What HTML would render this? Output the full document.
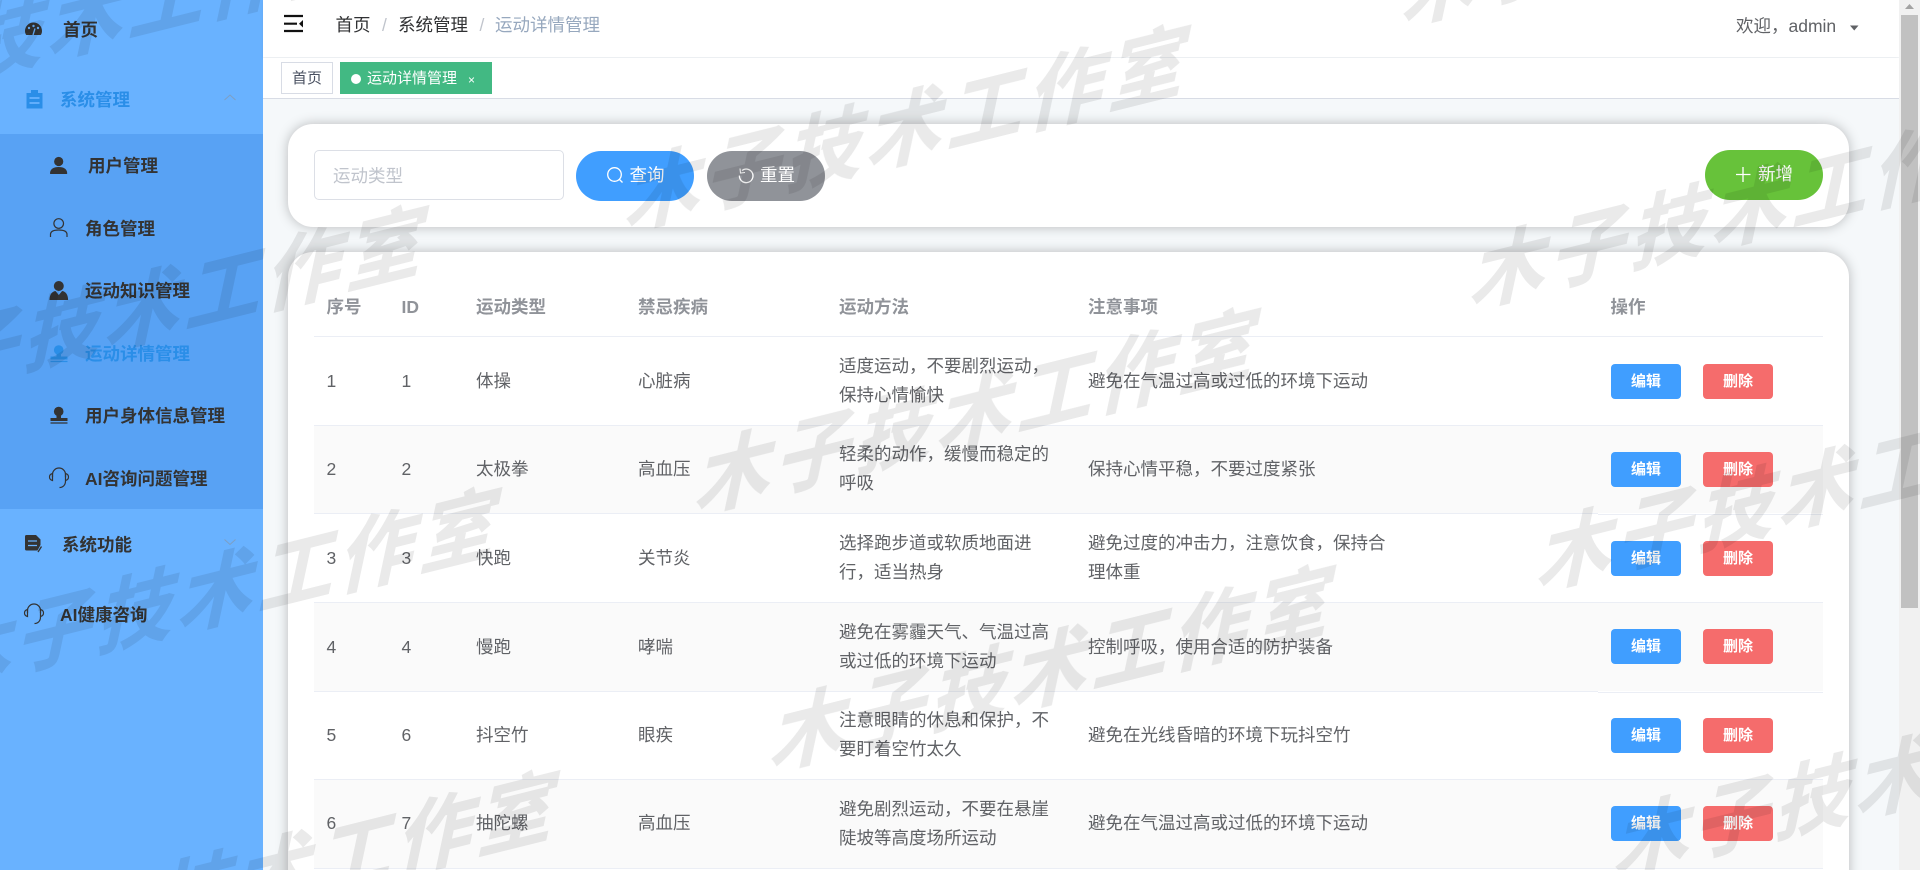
<!DOCTYPE html>
<html lang="zh-CN">
<head>
<meta charset="utf-8">
<title>运动详情管理</title>
<style>
html,body{margin:0;padding:0;width:1920px;height:870px;overflow:hidden;background:#f5f8fa}
body{position:relative;font-family:"Liberation Sans","Noto Sans CJK SC",sans-serif;font-size:17.5px;color:#606266}
.a{position:absolute;white-space:nowrap;line-height:30px;height:30px}
.box{position:absolute}
.side{left:0;top:0;width:263px;height:870px;background:#69b2ff}
.sub{left:0;top:134px;width:263px;height:375px;background:#58a2f4}
.m{font-weight:700;color:#333}
.act{color:#2a8ee8}
.head{left:263px;top:0;width:1636px;height:57px;background:#fff;box-shadow:0 1px 3px rgba(0,21,41,.06)}
.tabs{left:263px;top:58px;width:1636px;height:40px;background:#fff;border-bottom:1px solid #d8dce5}
.card{left:288px;width:1561px;background:#fff;border-radius:25px;box-shadow:0 0 12px rgba(0,0,0,.25)}
.th{font-weight:700;color:#909399}
.line{left:314px;width:1509px;height:1px;background:#ebeef5}
.stripe{left:314px;width:1509px;background:#fafafa}
.two{position:absolute;white-space:nowrap;line-height:29.4px}
.btn{position:absolute;width:70px;height:35px;line-height:35px;text-align:center;border-radius:4px;color:#fff;font-size:15px;font-weight:700}
.e{left:1611px;background:#409eff}
.d{left:1703px;background:#f56c6c}
.round{position:absolute;height:50px;border-radius:25px;width:118px}
.w{color:#fff;line-height:30px;height:30px}
</style>
</head>
<body>
<div class="box side"></div>
<div class="box sub"></div>
<div class="a m" style="left:63px;top:15px">首页</div>
<div class="a m act" style="left:60px;top:85px">系统管理</div>
<div class="a m" style="left:88px;top:151px">用户管理</div>
<div class="a m" style="left:85px;top:214px">角色管理</div>
<div class="a m" style="left:85px;top:276px">运动知识管理</div>
<div class="a m act" style="left:85px;top:339px">运动详情管理</div>
<div class="a m" style="left:85px;top:401px">用户身体信息管理</div>
<div class="a m" style="left:85px;top:464px">AI咨询问题管理</div>
<div class="a m" style="left:62px;top:530px">系统功能</div>
<div class="a m" style="left:60px;top:600px">AI健康咨询</div>

<div class="box head"></div>
<div class="a" style="left:335.5px;top:10px;color:#303133">首页</div>
<div class="a" style="left:382px;top:10px;color:#c0c4cc">/</div>
<div class="a" style="left:398px;top:10px;color:#303133">系统管理</div>
<div class="a" style="left:479.5px;top:10px;color:#c0c4cc">/</div>
<div class="a" style="left:495px;top:10px;color:#97a8be">运动详情管理</div>
<div class="a" style="left:1736px;top:11px">欢迎，admin</div>

<div class="box tabs"></div>
<div class="box" style="left:281px;top:62px;width:50px;height:30px;border:1px solid #d8dce5;background:#fff;color:#495060;font-size:15px;line-height:32px;text-align:center">首页</div>
<div class="box" style="left:340px;top:62px;width:152px;height:32px;background:#42b983"></div>
<div class="box" style="left:351px;top:74px;width:10px;height:10px;border-radius:50%;background:#fff"></div>
<div class="a" style="left:367px;top:64px;color:#fff;font-size:15px">运动详情管理</div>
<div class="a" style="left:468px;top:65px;color:#fff;font-size:12px">×</div>

<div class="box card" style="top:124px;height:103px"></div>
<div class="box card" style="top:252px;height:680px"></div>

<div class="box" style="left:314px;top:150px;width:248px;height:48px;border:1px solid #dcdfe6;border-radius:5px;background:#fff"></div>
<div class="a" style="left:333px;top:161px;color:#c0c4cc">运动类型</div>
<div class="round" style="left:576px;top:151px;background:#409eff"></div>
<div class="a w" style="left:629.5px;top:160px">查询</div>
<div class="round" style="left:707px;top:151px;background:#909399"></div>
<div class="a w" style="left:760px;top:160px">重置</div>
<div class="round" style="left:1705px;top:150px;background:#67c23a"></div>
<div class="a w" style="left:1758px;top:159px">新增</div>

<!-- table stripes -->
<div class="box stripe" style="top:426px;height:87px"></div>
<div class="box stripe" style="top:603px;height:88px"></div>
<div class="box stripe" style="top:780px;height:88px"></div>
<div class="box line" style="top:336px"></div>
<div class="box line" style="top:425px"></div>
<div class="box line" style="top:513px;width:1284px"></div>
<div class="box line" style="top:514px;left:1598px;width:225px"></div>
<div class="box line" style="top:602px"></div>
<div class="box line" style="top:691px;width:1284px"></div>
<div class="box line" style="top:692px;left:1598px;width:225px"></div>
<div class="box line" style="top:779px"></div>
<div class="box line" style="top:868px"></div>

<div class="a th" style="left:326.5px;top:292px">序号</div>
<div class="a th" style="left:401.5px;top:292px">ID</div>
<div class="a th" style="left:476px;top:292px">运动类型</div>
<div class="a th" style="left:638px;top:292px">禁忌疾病</div>
<div class="a th" style="left:839px;top:292px">运动方法</div>
<div class="a th" style="left:1088px;top:292px">注意事项</div>
<div class="a th" style="left:1610.5px;top:292px">操作</div>

<!-- row 1 -->
<div class="a" style="left:326.5px;top:366px">1</div><div class="a" style="left:401.5px;top:366px">1</div>
<div class="a" style="left:476px;top:366px">体操</div><div class="a" style="left:638px;top:366px">心脏病</div>
<div class="two" style="left:839px;top:352px">适度运动，不要剧烈运动，<br>保持心情愉快</div>
<div class="a" style="left:1088px;top:366px">避免在气温过高或过低的环境下运动</div>
<div class="btn e" style="top:364px">编辑</div><div class="btn d" style="top:364px">删除</div>
<!-- row 2 -->
<div class="a" style="left:326.5px;top:454px">2</div><div class="a" style="left:401.5px;top:454px">2</div>
<div class="a" style="left:476px;top:454px">太极拳</div><div class="a" style="left:638px;top:454px">高血压</div>
<div class="two" style="left:839px;top:440px">轻柔的动作，缓慢而稳定的<br>呼吸</div>
<div class="a" style="left:1088px;top:454px">保持心情平稳，不要过度紧张</div>
<div class="btn e" style="top:452px">编辑</div><div class="btn d" style="top:452px">删除</div>
<!-- row 3 -->
<div class="a" style="left:326.5px;top:543px">3</div><div class="a" style="left:401.5px;top:543px">3</div>
<div class="a" style="left:476px;top:543px">快跑</div><div class="a" style="left:638px;top:543px">关节炎</div>
<div class="two" style="left:839px;top:529px">选择跑步道或软质地面进<br>行，适当热身</div>
<div class="two" style="left:1088px;top:529px">避免过度的冲击力，注意饮食，保持合<br>理体重</div>
<div class="btn e" style="top:541px">编辑</div><div class="btn d" style="top:541px">删除</div>
<!-- row 4 -->
<div class="a" style="left:326.5px;top:632px">4</div><div class="a" style="left:401.5px;top:632px">4</div>
<div class="a" style="left:476px;top:632px">慢跑</div><div class="a" style="left:638px;top:632px">哮喘</div>
<div class="two" style="left:839px;top:618px">避免在雾霾天气、气温过高<br>或过低的环境下运动</div>
<div class="a" style="left:1088px;top:632px">控制呼吸，使用合适的防护装备</div>
<div class="btn e" style="top:629px">编辑</div><div class="btn d" style="top:629px">删除</div>
<!-- row 5 -->
<div class="a" style="left:326.5px;top:720px">5</div><div class="a" style="left:401.5px;top:720px">6</div>
<div class="a" style="left:476px;top:720px">抖空竹</div><div class="a" style="left:638px;top:720px">眼疾</div>
<div class="two" style="left:839px;top:706px">注意眼睛的休息和保护，不<br>要盯着空竹太久</div>
<div class="a" style="left:1088px;top:720px">避免在光线昏暗的环境下玩抖空竹</div>
<div class="btn e" style="top:718px">编辑</div><div class="btn d" style="top:718px">删除</div>
<!-- row 6 -->
<div class="a" style="left:326.5px;top:808px">6</div><div class="a" style="left:401.5px;top:808px">7</div>
<div class="a" style="left:476px;top:808px">抽陀螺</div><div class="a" style="left:638px;top:808px">高血压</div>
<div class="two" style="left:839px;top:795px">避免剧烈运动，不要在悬崖<br>陡坡等高度场所运动</div>
<div class="a" style="left:1088px;top:808px">避免在气温过高或过低的环境下运动</div>
<div class="btn e" style="top:806px">编辑</div><div class="btn d" style="top:806px">删除</div>

<!-- scrollbar -->
<div class="box" style="left:1899px;top:0;width:21px;height:870px;background:#f1f1f1"></div>
<div class="box" style="left:1901px;top:15px;width:17px;height:593px;background:#c1c1c1"></div>

<!-- icons -->
<svg class="box" style="left:0;top:0" width="1920" height="870" viewBox="0 0 1920 870">
  <!-- odometer -->
  <path d="M25 31a8.5 8.5 0 1 1 17 0c0 1.800-.5 3-1.300 4H26.300C25.500 34 25 32.800 25 31z" fill="#333"/>
  <circle cx="29" cy="28" r="1.200" fill="#69b2ff"/><circle cx="33.500" cy="26" r="1.200" fill="#69b2ff"/><circle cx="38" cy="28" r="1.200" fill="#69b2ff"/>
  <path d="M33 35l2-6.500" stroke="#69b2ff" stroke-width="1.300"/>
  <!-- clipboard -->
  <path d="M26.500 93h4.500v-3h7v3h4.500v15.500h-16z" fill="#2a8ee8"/>
  <path d="M29.500 98h10M29.500 103h10" stroke="#69b2ff" stroke-width="1.800"/>
  <path d="M224.500 100l5.500-5 5.500 5" fill="none" stroke="#7d9fc4" stroke-width="1"/>
  <!-- user solid -->
  <circle cx="58.700" cy="161.500" r="4.600" fill="#333"/>
  <path d="M50 173.500c0-4.500 3.500-6.500 8.700-6.500s8.500 2 8.500 6.500c0 .3-.3.500-.8.500H50.800c-.5 0-.8-.2-.8-.5z" fill="#333"/>
  <!-- user outline -->
  <circle cx="58.700" cy="223.500" r="4.800" fill="none" stroke="#333" stroke-width="1.200"/>
  <path d="M50.500 237v-2.500c0-3 3-4.500 8.200-4.500s8.300 1.500 8.300 4.500v2.500" fill="none" stroke="#333" stroke-width="1.200"/>
  <!-- custom -->
  <circle cx="58.800" cy="286" r="5" fill="#333"/>
  <path d="M49.500 300c0-5.500 2.500-8.500 6-9l3.300 4 3.300-4c3.500.5 6 3.500 6 9z" fill="#333"/>
  <!-- stamp blue -->
  <circle cx="58.700" cy="350" r="4.800" fill="#2a8ee8"/>
  <path d="M56.500 353h4.500v3.500h6.500v3h-17v-3h6z" fill="#2a8ee8"/><path d="M50.500 361.500h17" stroke="#2a8ee8" stroke-width="1.300"/>
  <!-- stamp dark -->
  <circle cx="58.700" cy="411.500" r="4.800" fill="#333"/>
  <path d="M56.500 414.500h4.500v3.500h6.500v3h-17v-3h6z" fill="#333"/><path d="M50.500 423h17" stroke="#333" stroke-width="1.300"/>
  <!-- headset sub -->
  <g fill="none" stroke="#333" stroke-width="1.200">
    <path d="M52.500 477v-2.500a6.500 6.500 0 0 1 13 0V477"/><path d="M52.500 473.500c-2 .5-3 2-3 3.500s1 3 3 3.500zM65.500 473.500c2 .5 3 2 3 3.500s-1 3-3 3.500z"/><path d="M65.500 481c0 4-2.500 6.500-6 6.500"/>
    <path d="M27.500 613v-2.500a6.500 6.500 0 0 1 13 0V613"/><path d="M27.500 609.500c-2 .5-3 2-3 3.500s1 3 3 3.500zM40.500 609.500c2 .5 3 2 3 3.500s-1 3-3 3.500z"/><path d="M40.500 617c0 4-2.500 6.500-6 6.500"/>
  </g>
  <!-- doc -->
  <path d="M26.500 535h9.500l4.500 4.500v5.500l-3 5.500H26.500a1.500 1.500 0 0 1-1.500-1.500v-12.500a1.500 1.500 0 0 1 1.500-1.500z" fill="#333"/>
  <path d="M28 541h9M28 545.500h9" stroke="#69b2ff" stroke-width="1.300"/>
  <path d="M38 552l3.500-5.500" stroke="#333" stroke-width="1.300"/>
  <path d="M224.500 539.500l5.500 5 5.500-5" fill="none" stroke="#7d9fc4" stroke-width="1"/>
  <!-- hamburger -->
  <path d="M284 16h19M284 23.700h13M284 31h19" stroke="#111" stroke-width="2.200"/>
  <path d="M303 20v7.500l-4-3.700z" fill="#111"/>
  <!-- caret -->
  <path d="M1850 25.500h8.500l-4.250 5z" fill="#606266"/>
  <!-- search -->
  <circle cx="614.500" cy="174.500" r="6.800" fill="none" stroke="#fff" stroke-width="1.300"/><path d="M619.500 179.500l3 3" stroke="#fff" stroke-width="1.300"/>
  <!-- refresh -->
  <path d="M742 170.500a6.800 6.800 0 1 1-2.600 5" fill="none" stroke="#fff" stroke-width="1.300"/><path d="M740 168.500l.5 4.500 4.500-.5" fill="none" stroke="#fff" stroke-width="1.100"/>
  <!-- plus -->
  <path d="M1743 167v15M1736 174.500h14.500" stroke="#fff" stroke-width="1.300"/>
  <!-- scrollbar arrow -->
  <path d="M1909.500 4l4.500 5h-9z" fill="#a3a3a3"/>
</svg>

<!-- watermark -->
<svg class="box" style="left:0;top:0;pointer-events:none" width="1920" height="870" viewBox="0 0 1920 870">
  <g opacity=".085" font-family="'Liberation Sans','Noto Sans CJK SC',sans-serif" font-size="77" font-weight="700" letter-spacing="6" fill="#000" stroke="#000" stroke-width="1">
    <text transform="translate(-195 117) rotate(-14) skewX(-26)">木子技术工作室</text>
    <text transform="translate(624 228) rotate(-14) skewX(-26)">木子技术工作室</text>
    <text transform="translate(1401 23) rotate(-14) skewX(-26)">木子技术工作室</text>
    <text transform="translate(-138 408) rotate(-14) skewX(-26)">木子技术工作室</text>
    <text transform="translate(694 511) rotate(-14) skewX(-26)">木子技术工作室</text>
    <text transform="translate(1469 306) rotate(-14) skewX(-26)">木子技术工作室</text>
    <text transform="translate(-65 690) rotate(-14) skewX(-26)">木子技术工作室</text>
    <text transform="translate(769 768) rotate(-14) skewX(-26)">木子技术工作室</text>
    <text transform="translate(1536 588) rotate(-14) skewX(-26)">木子技术工作室</text>
    <text transform="translate(-7 973) rotate(-14) skewX(-26)">木子技术工作室</text>
    <text transform="translate(1613 876) rotate(-14) skewX(-26)">木子技术工作室</text>
  </g>
</svg>
</body>
</html>
